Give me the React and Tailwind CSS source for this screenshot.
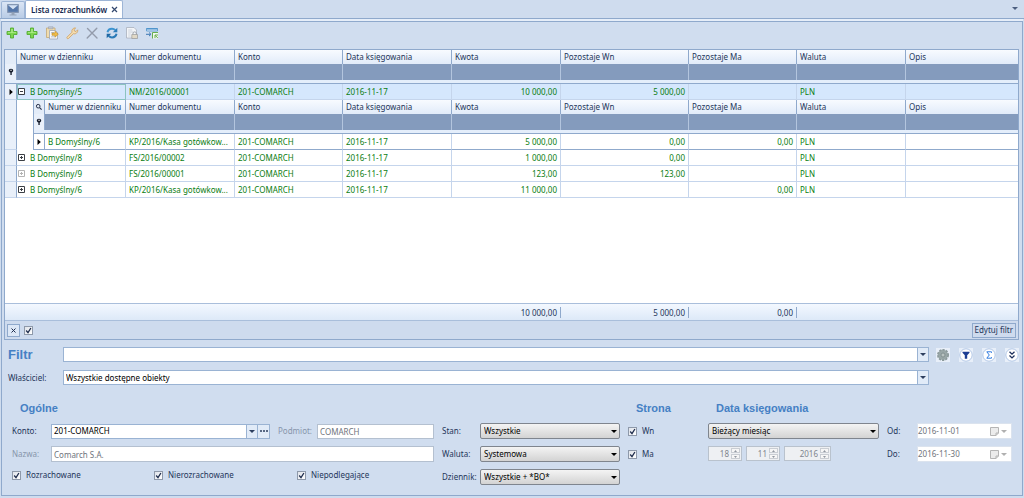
import { useState } from 'react';

const COLUMNS = [
  { key: 'journal', label: 'Numer w dzienniku' },
  { key: 'doc', label: 'Numer dokumentu' },
  { key: 'account', label: 'Konto' },
  { key: 'date', label: 'Data księgowania' },
  { key: 'amount', label: 'Kwota', num: true },
  { key: 'debit', label: 'Pozostaje Wn', num: true },
  { key: 'credit', label: 'Pozostaje Ma', num: true },
  { key: 'currency', label: 'Waluta' },
  { key: 'desc', label: 'Opis' },
];

const ROWS = [
  { journal: 'B Domyślny/5', doc: 'NM/2016/00001', account: '201-COMARCH', date: '2016-11-17', amount: '10 000,00', debit: '5 000,00', credit: '', currency: 'PLN', desc: '' },
  { journal: 'B Domyślny/8', doc: 'FS/2016/00002', account: '201-COMARCH', date: '2016-11-17', amount: '1 000,00', debit: '0,00', credit: '', currency: 'PLN', desc: '' },
  { journal: 'B Domyślny/9', doc: 'FS/2016/00001', account: '201-COMARCH', date: '2016-11-17', amount: '123,00', debit: '123,00', credit: '', currency: 'PLN', desc: '', leaf: true },
  { journal: 'B Domyślny/6', doc: 'KP/2016/Kasa gotówkow...', account: '201-COMARCH', date: '2016-11-17', amount: '11 000,00', debit: '', credit: '0,00', currency: 'PLN', desc: '' },
];

const DETAILS = [
  { journal: 'B Domyślny/6', doc: 'KP/2016/Kasa gotówkow...', account: '201-COMARCH', date: '2016-11-17', amount: '5 000,00', debit: '0,00', credit: '0,00', currency: 'PLN', desc: '' },
];

const SUMMARY = { amount: '10 000,00', debit: '5 000,00', credit: '0,00' };

/* ---------- icons ---------- */

const PlusIcon = () => (
  <svg viewBox="0 0 14 14" className="w-3.5 h-3.5">
    <path d="M5.500 2h3v3.500H12v3H8.500V12h-3V8.500H2v-3h3.500z" fill="#7bd64c" stroke="#55ad33" strokeWidth=".9" />
    <path d="M6.300 3h1.400v3.300H11v.8H3v-.8h3.300z" fill="#aeea88" />
  </svg>
);

const CopyIcon = () => (
  <svg viewBox="0 0 14 14" className="w-3.5 h-3.5">
    <path d="M1.500 2h8.500v9.500H1.500z" fill="#f0dcae" stroke="#c4a875" strokeWidth=".8" />
    <path d="M3.500.800h4.500v2H3.500z" fill="#c5cbd5" stroke="#98a0ad" strokeWidth=".6" />
    <path d="M4.500 4.500h6l2 2v6.500h-8z" fill="#f7f8fa" stroke="#9aa5b5" strokeWidth=".8" />
    <path d="M6 6.500h3M6 10.800h4" stroke="#a9b6c8" strokeWidth=".8" />
    <path d="M7 7h3V5.200l3.300 3-3.300 3V9.300H7z" fill="#efbc48" stroke="#bd8924" strokeWidth=".6" />
  </svg>
);

const WrenchIcon = () => (
  <svg viewBox="0 0 14 14" className="w-3.5 h-3.5">
    <path d="M2 11.200 7 6.200C6.300 4 8 1.600 10.600 1.900L9.100 3.700l.4 1.400 1.500.4 1.700-1.700c.5 2.600-2 4.700-4.300 3.900l-4.900 4.800c-.9.7-2.200-.4-1.500-1.300z" fill="#f5ddb0" stroke="#cda061" strokeWidth=".8" />
  </svg>
);

const CrossIcon = () => (
  <svg viewBox="0 0 14 14" className="w-3.5 h-3.5">
    <path d="M2.500 2.500l9.500 9.500M11.800 2.200l-9.600 9.800" stroke="#939bab" strokeWidth="1.400" strokeLinecap="round" />
  </svg>
);

const RefreshIcon = () => (
  <svg viewBox="0 0 14 14" className="w-3.5 h-3.5">
    <path d="M2.500 6.300C3 3.800 5 2.700 7 2.700c1.300 0 2.500.6 3.300 1.500" fill="none" stroke="#3c93cf" strokeWidth="2" />
    <path d="M12.300 1.800v4.500H7.800z" fill="#2b7cba" />
    <path d="M11.500 7.800c-.5 2.500-2.500 3.600-4.500 3.600-1.300 0-2.500-.6-3.300-1.500" fill="none" stroke="#2a7ab7" strokeWidth="2" />
    <path d="M1.700 12.300V7.800h4.500z" fill="#1f68a4" />
  </svg>
);

const PreviewIcon = () => (
  <svg viewBox="0 0 14 14" className="w-3.5 h-3.5">
    <path d="M1.500 1.500h7.500l2.500 2.500v8H1.500z" fill="#f3f5f8" stroke="#a9b0bc" strokeWidth=".8" />
    <path d="M3.200 4h4M3.200 6h5M3.200 8h2.500M3.200 10h2.500" stroke="#c3cad6" strokeWidth=".8" />
    <path d="M6.800 8.500h5.700v4H6.800z" fill="#e0d8c6" stroke="#9a9a98" strokeWidth=".7" />
    <path d="M8 8.300V7c0-1.500 3.300-1.500 3.300 0v1.300" fill="none" stroke="#999ea6" strokeWidth=".9" />
  </svg>
);

const ExportIcon = () => (
  <svg viewBox="0 0 14 14" className="w-3.5 h-3.5">
    <path d="M1.500 2.500h11v2.500h-11z" fill="#dceafa" stroke="#5b9bd0" strokeWidth=".9" />
    <path d="M1.500 2.200h11v1.300h-11z" fill="#4b92cb" />
    <path d="M1 8.300h4M4 6.500l2 1.800-2 1.800" fill="none" stroke="#3c78b4" />
    <path d="M7.500 6.500H13v6H7.500z" fill="#f1f9ed" />
    <path d="M7.500 12.500v-6H13M10 12V9h3M10.300 9.300l2.500 2.700" fill="none" stroke="#66ad51" />
  </svg>
);

const DesktopIcon = () => (
  <svg viewBox="0 0 14 14" className="w-3.5 h-3.5">
    <path d="M1.500 1.500h11v8h-11z" fill="#7c98bf" stroke="#7c8eaa" strokeWidth=".8" />
    <path d="M2.200 2.200 7 6l4.800-3.800v6.600H2.200z" fill="#5577a9" />
    <path d="M2.200 2.200h9.600L7 6.200z" fill="#d5e2f3" />
    <path d="M5.500 9.500h3v2h2v1h-7v-1h2z" fill="#95a3b7" />
  </svg>
);

const GearIcon = () => (
  <svg viewBox="0 0 14 14" className="w-3.5 h-3.5">
    <circle cx="7" cy="7" r="5" fill="#9ba9a9" stroke="#8a9899" strokeWidth="2" strokeDasharray="2.200 1" />
    <circle cx="7" cy="7" r="4.500" fill="#98a6a6" />
    <circle cx="7" cy="7" r="2" fill="#b8c2c0" stroke="#7c8a8b" strokeWidth=".8" />
  </svg>
);

const FunnelIcon = () => (
  <svg viewBox="0 0 14 14" className="w-3.5 h-3.5">
    <circle cx="7" cy="7" r="6.200" fill="#fff" stroke="#9eb9e0" strokeWidth=".8" />
    <path d="M3.500 3.800h7v1L8.200 7.200v3.600H5.800V7.200L3.500 4.800z" fill="#1d3f94" />
  </svg>
);

const SigmaIcon = () => (
  <svg viewBox="0 0 14 14" className="w-3.5 h-3.5">
    <circle cx="7" cy="7" r="6.200" fill="#fff" stroke="#9eb9e0" strokeWidth=".8" />
    <path d="M9.500 4.800V3.800H4.800L7.300 7l-2.500 3.200h4.700v-1" fill="none" stroke="#2f7be0" />
  </svg>
);

const ChevronsIcon = () => (
  <svg viewBox="0 0 14 14" className="w-3.5 h-3.5">
    <circle cx="7" cy="7" r="6.200" fill="#fff" stroke="#9eb9e0" strokeWidth=".8" />
    <path d="M4.500 3.800 7 6.200l2.500-2.400M4.500 7.500 7 9.900l2.500-2.400" fill="none" stroke="#1c2f5c" strokeWidth="1.300" />
  </svg>
);

const Pin = () => (
  <svg viewBox="0 0 6 8" className="mx-auto block w-1.5 h-2">
    <path d="M3 .8c1.400 0 2.200.7 2.200 1.800S4.400 4.300 3.700 4.600V7H2.400V4.600C1.700 4.300.8 3.600.8 2.600S1.600.8 3 .8z" fill="#111827" />
    <path d="M2.300 1.800h1.500v1H2.300z" fill="#fff" />
  </svg>
);

const Lens = () => (
  <svg viewBox="0 0 8 8" className="mx-auto block w-2 h-2">
    <circle cx="3.200" cy="3.200" r="1.800" fill="none" stroke="#27314a" />
    <path d="M4.600 4.600 6.600 6.600" stroke="#27314a" strokeWidth="1.200" />
  </svg>
);

const Pointer = () => (
  <svg viewBox="0 0 4 6" className="mx-auto block w-1 h-1.5">
    <path d="M.5 0 3.800 3 .5 6z" fill="#000" />
  </svg>
);

const Caret = ({ className = 'text-[#2d3f5f]' }) => (
  <svg viewBox="0 0 6 3" className={`block w-1.5 h-[3px] ${className}`}>
    <path d="M0 0h6L3 3z" fill="currentColor" />
  </svg>
);

function Expander({ open, muted }) {
  return (
    <svg viewBox="0 0 7 7" className={`block w-[7px] h-[7px] ${muted ? 'text-[#b3b3b3]' : 'text-[#3c4046]'}`}>
      <path d="M.5.500h6v6h-6z" fill="#fff" stroke="currentColor" />
      <path d={open ? 'M2 3.500h3' : 'M2 3.500h3M3.500 2v3'} stroke="currentColor" />
    </svg>
  );
}

/* ---------- grid ---------- */

function GridColumns({ nested }) {
  return (
    <colgroup>
      <col className={nested ? 'w-[11px]' : 'w-3'} />
      <col className={nested ? 'w-[81px]' : 'w-[109px]'} />
      <col className="w-[109px]" />
      <col className="w-[108px]" />
      <col className="w-[109px]" />
      <col className="w-[109px]" />
      <col className="w-[128px]" />
      <col className="w-[108px]" />
      <col className="w-[109px]" />
      <col />
    </colgroup>
  );
}

function GridHead({ nested }) {
  return (
    <thead>
      <tr className="h-[14px] bg-linear-to-b from-[#f8fbff] to-[#e1ebf9]">
        <th className="border-r border-[#8fa9cc] bg-[#e3ecf8]">{nested && <Lens />}</th>
        {COLUMNS.map((c) => (
          <th
            key={c.key}
            className="border-r border-[#8fa9cc] px-[3px] text-left font-normal whitespace-nowrap text-[#24365a] last:border-r-0"
          >
            {c.label}
          </th>
        ))}
      </tr>
      <tr className="h-4 bg-[#849bbd]">
        <td className="border-r border-[#8fa9cc] bg-[#e9f0fa]"><Pin /></td>
        {COLUMNS.map((c) => (
          <td key={c.key} className="border-r border-[#b3c5de] last:border-r-0" />
        ))}
      </tr>
      <tr className="h-1 bg-[#e4eefb]">
        <td colSpan={10} className="border-b border-[#8fa9cc]" />
      </tr>
    </thead>
  );
}

function Cells({ row, skipFirst, lineColor = 'border-[#c5d5ec]' }) {
  return COLUMNS.slice(skipFirst ? 1 : 0).map((c) => (
    <td
      key={c.key}
      className={`border-r border-b px-[3px] whitespace-nowrap last:border-r-0 ${lineColor} ${c.num ? 'text-right' : ''}`}
    >
      {row[c.key]}
    </td>
  ));
}

function DetailGrid() {
  return (
    <table className="w-full table-fixed border-separate border-spacing-0 border-l border-[#8fa9cc]">
      <GridColumns nested />
      <GridHead nested />
      <tbody className="text-[#0a7d12]">
        {DETAILS.map((row) => (
          <tr key={row.journal} className="h-4 bg-white">
            <td className="border-r border-b border-[#8fa9cc]"><Pointer /></td>
            <Cells row={row} lineColor="border-r-[#c5d5ec] border-b-[#8fa9cc]" />
          </tr>
        ))}
      </tbody>
    </table>
  );
}

function MainGrid() {
  const [open, setOpen] = useState(true);
  return (
    <table className="w-full table-fixed border-separate border-spacing-0">
      <GridColumns />
      <GridHead />
      <tbody className="text-[#0a7d12]">
        {ROWS.map((row, i) => [
          <tr key={row.journal} className={`h-4 ${i === 0 ? 'bg-[#d5e7fd]' : 'bg-white'}`}>
            <td className="border-r border-b border-r-[#8fa9cc] border-b-[#c5d5ec] bg-[#e9f0fa]">{i === 0 && <Pointer />}</td>
            <td className={`border-r border-b border-[#c5d5ec] ${i === 0 ? 'outline outline-[#8cc3c0] -outline-offset-1' : ''}`}>
              <div className="flex items-center gap-[5px] pl-px whitespace-nowrap">
                <button type="button" aria-label="Szczegóły" onClick={() => i === 0 && setOpen(!open)}>
                  <Expander open={i === 0 && open} muted={row.leaf} />
                </button>
                {row.journal}
              </div>
            </td>
            <Cells row={row} skipFirst />
          </tr>,
          i === 0 && open && (
            <tr key="details" className="bg-white">
              <td className="border-r border-b border-r-[#8fa9cc] border-b-[#c5d5ec] bg-[#e9f0fa]" />
              <td colSpan={9} className="pl-4"><DetailGrid /></td>
            </tr>
          ),
        ])}
      </tbody>
    </table>
  );
}

function SummaryRow() {
  return (
    <table className="w-full table-fixed border-separate border-spacing-0 border-y border-[#a9bedb] bg-linear-to-b from-[#f3f8ff] to-[#dde9f8]">
      <GridColumns />
      <tbody>
        <tr className="h-4 text-[#24365a]">
          <td />
          {COLUMNS.map((c) => (
            <td key={c.key} className="text-right">
              {SUMMARY[c.key] && (
                <span className="block border-r border-[#8fa9cc] pr-[3px] leading-[11px]">{SUMMARY[c.key]}</span>
              )}
            </td>
          ))}
        </tr>
      </tbody>
    </table>
  );
}

/* ---------- form controls ---------- */

function Check({ label, className = '' }) {
  return (
    <label className={`flex items-center gap-[5px] ${className}`}>
      <span className="grid">
        <input
          type="checkbox"
          defaultChecked
          aria-label={label ? undefined : 'Filtr aktywny'}
          className="peer col-start-1 row-start-1 h-[9px] w-[9px] appearance-none border border-[#8e99aa] bg-linear-to-br from-[#dfe3ea] to-white"
        />
        <svg viewBox="0 0 9 9" className="pointer-events-none invisible col-start-1 row-start-1 h-[9px] w-[9px] peer-checked:visible">
          <path d="M2.200 4.500 4 6.600 6.900 2" fill="none" stroke="#1f2d4d" strokeWidth="1.300" />
        </svg>
      </span>
      {label}
    </label>
  );
}

function Select({ label, value, className = '' }) {
  return (
    <span className={`relative block ${className}`}>
      <select
        aria-label={label}
        className="block h-4 w-full appearance-none rounded-[2px] border border-[#7f858e] bg-linear-to-b from-[#f4f4f4] to-[#d3d3d3] pl-[3px] text-black"
      >
        <option>{value}</option>
      </select>
      <Caret className="pointer-events-none absolute top-[7px] right-[3px] text-black" />
    </span>
  );
}

function Combo({ id, value }) {
  return (
    <div className="flex h-[15px] flex-1 border border-[#9ab3d3] bg-white">
      <input id={id} aria-label={id === 'filtr' ? 'Filtr' : undefined} defaultValue={value} className="min-w-0 flex-1 px-[2px] text-black outline-none" />
      <button type="button" aria-label="Rozwiń" className="grid w-[11px] place-items-center border-l border-[#9ab3d3] bg-[#e1ebf8]">
        <Caret />
      </button>
    </div>
  );
}

function Spinner({ label, value, className }) {
  return (
    <span className={`flex h-[15px] border border-[#b9c2cd] bg-[#eef0f3] p-px ${className}`}>
      <input aria-label={label} defaultValue={value} disabled className="min-w-0 flex-1 pr-[2px] text-right text-[#80858d]" />
      <span className="flex w-[9px] flex-col gap-px">
        <button type="button" disabled aria-label="Więcej" className="grid flex-1 place-items-center border border-[#c9cdd3] bg-[#f6f6f6]">
          <svg viewBox="0 0 3 2" className="block h-[2px] w-[3px]"><path d="M0 2h3L1.500 0z" fill="#9298a2" /></svg>
        </button>
        <button type="button" disabled aria-label="Mniej" className="grid flex-1 place-items-center border border-[#c9cdd3] bg-[#f6f6f6]">
          <svg viewBox="0 0 3 2" className="block h-[2px] w-[3px]"><path d="M0 0h3L1.500 2z" fill="#9298a2" /></svg>
        </button>
      </span>
    </span>
  );
}

function DateField({ id, label, value }) {
  return (
    <div className="flex items-center">
      <label htmlFor={id} className="w-[30px]">{label}</label>
      <div className="flex h-4 w-[95px] items-center border border-[#dbe3ee] bg-white pr-1">
        <input id={id} defaultValue={value} disabled className="min-w-0 flex-1 text-[#6f747c]" />
        <button type="button" disabled aria-label="Kalendarz" className="flex items-center gap-[2px]">
          <svg viewBox="0 0 9 9" className="h-[9px] w-[9px]">
            <path d="M.5.500h8v5.500l-2.500 2.500H.5z" fill="#ececec" stroke="#b5b5b5" />
            <path d="M8.500 6H6v2.500" fill="none" stroke="#b5b5b5" />
          </svg>
          <Caret className="text-[#b0b0b0]" />
        </button>
      </div>
    </div>
  );
}

function Heading({ children }) {
  return (
    <h2 className="mb-[7px] pl-2 font-['Liberation_Sans',sans-serif] text-[11px] leading-4 font-bold text-[#4580c4]">
      {children}
    </h2>
  );
}

const TOOLS = [
  { label: 'Dodaj', icon: PlusIcon },
  { label: 'Dodaj z kopii', icon: PlusIcon },
  { label: 'Kopiuj', icon: CopyIcon },
  { label: 'Edytuj', icon: WrenchIcon },
  { label: 'Usuń', icon: CrossIcon },
  { label: 'Odśwież', icon: RefreshIcon },
  { label: 'Podgląd', icon: PreviewIcon },
  { label: 'Eksport', icon: ExportIcon },
];

const FILTER_TOOLS = [
  { label: 'Ustawienia', icon: GearIcon },
  { label: 'Filtruj', icon: FunnelIcon },
  { label: 'Suma', icon: SigmaIcon },
  { label: 'Zwiń', icon: ChevronsIcon },
];

export default function App() {
  return (
    <div className="flex min-h-screen flex-col bg-[#cfdcee] pb-[2px] font-['Noto_Sans',sans-serif] text-[8px] leading-[12px] text-[#24365a]">
      {/* Tabs */}
      <div className="flex h-[19px] items-end border-b border-[#8fa9cc] pl-px">
        <button type="button" aria-label="Pulpit" className="grid h-[17px] w-[24px] place-items-center rounded-t-[2px] border border-b-0 border-[#9db5d6] bg-linear-to-b from-[#dbe6f5] to-[#b9cce6]">
          <DesktopIcon />
        </button>
        <div className="flex h-[18px] items-center gap-1 rounded-t-[2px] border border-b-0 border-[#9db5d6] bg-white pr-1 pl-[5px] font-semibold text-[#15294f]">
          Lista rozrachunków
          <button type="button" aria-label="Zamknij">
            <svg viewBox="0 0 7 7" className="block h-[7px] w-[7px]">
              <path d="M1 1l5 5M6 1 1 6" stroke="#33486e" strokeWidth="1.200" />
            </svg>
          </button>
        </div>
        <button type="button" aria-label="Lista kart" className="mr-1.5 mb-2 ml-auto"><Caret className="text-[#4c5f80]" /></button>
      </div>

      <main className="mx-px mt-[2px] flex flex-1 flex-col border border-[#8fa9cc] bg-[#d0ddef] shadow-[0_-2px_0_#e6eef9]">
        {/* Toolbar */}
        <div className="flex h-[27px] items-center gap-1.5 pb-[6px] pl-[3px]">
          {TOOLS.map(({ label, icon: Icon }) => (
            <button key={label} type="button" aria-label={label}><Icon /></button>
          ))}
        </div>

        {/* Grid */}
        <section className="mr-[3px] ml-[2px] flex flex-1 flex-col border border-[#8fa9cc] bg-white">
          <div className="flex-1"><MainGrid /></div>
          <SummaryRow />
          <div className="flex h-[18px] items-center bg-[#cedbee] px-[2px]">
            <button type="button" aria-label="Wyczyść filtr" className="grid h-[13px] w-[13px] place-items-center border border-[#8fa9cc] bg-[#dce7f6]">
              <svg viewBox="0 0 5 5" className="block h-[5px] w-[5px]"><path d="M.5.500l4 4M4.500.500l-4 4" stroke="#1f2d4d" /></svg>
            </button>
            <Check className="ml-1" />
            <button type="button" className="ml-auto h-[15px] border border-[#8fa9cc] px-[2px]">Edytuj filtr</button>
          </div>
        </section>

        {/* Filter */}
        <section className="pt-[7px] pr-[3px] pl-1.5">
          <div className="flex items-center">
            <h1 className="w-[55px] font-['Liberation_Sans',sans-serif] text-[13px] leading-[15px] font-bold text-[#4580c4]">Filtr</h1>
            <Combo id="filtr" value="" />
            <div className="flex w-[90px] justify-end gap-[9px]">
              {FILTER_TOOLS.map(({ label, icon: Icon }) => (
                <button key={label} type="button" aria-label={label} className="bg-[#e8eff9]"><Icon /></button>
              ))}
            </div>
          </div>
          <div className="mt-2 flex items-center pr-[90px]">
            <label htmlFor="owner" className="w-[55px]">Właściciel:</label>
            <Combo id="owner" value="Wszystkie dostępne obiekty" />
          </div>
        </section>

        <section className="flex px-[10px] pt-[15px] pb-[10px]">
          <div className="min-w-0 flex-1">
            <Heading>Ogólne</Heading>
            <div className="flex flex-col gap-[7px]">
              <div className="flex h-4 items-center">
                <label htmlFor="konto" className="w-[39px]">Konto:</label>
                <div className="flex min-w-0 flex-1 items-center">
                  <Combo id="konto" value="201-COMARCH" />
                  <button type="button" aria-label="Wybierz konto" className="grid h-[15px] w-3 place-items-center border border-l-0 border-[#9ab3d3] bg-[#e1ebf8]">
                    <svg viewBox="0 0 8 2" className="block h-[2px] w-2"><path d="M0 1h2M3 1h2M6 1h2" stroke="#2d3f5f" strokeWidth="1.500" /></svg>
                  </button>
                </div>
                <label htmlFor="podmiot" className="w-[47px] pl-2 text-[#8795ab]">Podmiot:</label>
                <input id="podmiot" defaultValue="COMARCH" disabled className="h-[15px] w-[117px] border border-[#b4c0d0] bg-white px-[2px] text-[#6f747c]" />
              </div>
              <div className="flex items-center">
                <label htmlFor="nazwa" className="w-[39px] text-[#8795ab]">Nazwa:</label>
                <input id="nazwa" defaultValue="Comarch S.A." disabled className="h-4 min-w-0 flex-1 border border-[#b4c0d0] bg-white px-[2px] text-[#6f747c]" />
              </div>
              <div className="flex h-3 items-center">
                <Check label="Rozrachowane" className="w-[142px]" />
                <Check label="Nierozrachowane" className="w-[143px]" />
                <Check label="Niepodlegające" />
              </div>
            </div>
          </div>

          <div className="ml-2 flex w-[178px] flex-col gap-[7px] pt-[23px]">
            {[['Stan:', 'Wszystkie'], ['Waluta:', 'Systemowa'], ['Dziennik:', 'Wszystkie + *BO*']].map(([label, value]) => (
              <label key={label} className="flex items-center">
                <span className="w-[38px]">{label}</span>
                <Select label={label} value={value} className="flex-1" />
              </label>
            ))}
          </div>

          <div className="ml-2 w-[80px]">
            <Heading>Strona</Heading>
            <div className="flex flex-col gap-[7px]">
              <Check label="Wn" className="h-4" />
              <Check label="Ma" className="h-4" />
            </div>
          </div>

          <div>
            <Heading>Data księgowania</Heading>
            <div className="flex gap-2">
              <div className="flex w-[171px] flex-col gap-[7px]">
                <Select label="Okres" value="Bieżący miesiąc" />
                <div className="flex gap-1">
                  <Spinner label="Dzień" value="18" className="w-[34px]" />
                  <Spinner label="Miesiąc" value="11" className="w-[34px]" />
                  <Spinner label="Rok" value="2016" className="w-[47px]" />
                </div>
              </div>
              <div className="flex flex-col gap-[7px]">
                <DateField id="od" label="Od:" value="2016-11-01" />
                <DateField id="do" label="Do:" value="2016-11-30" />
              </div>
            </div>
          </div>
        </section>
      </main>
    </div>
  );
}
